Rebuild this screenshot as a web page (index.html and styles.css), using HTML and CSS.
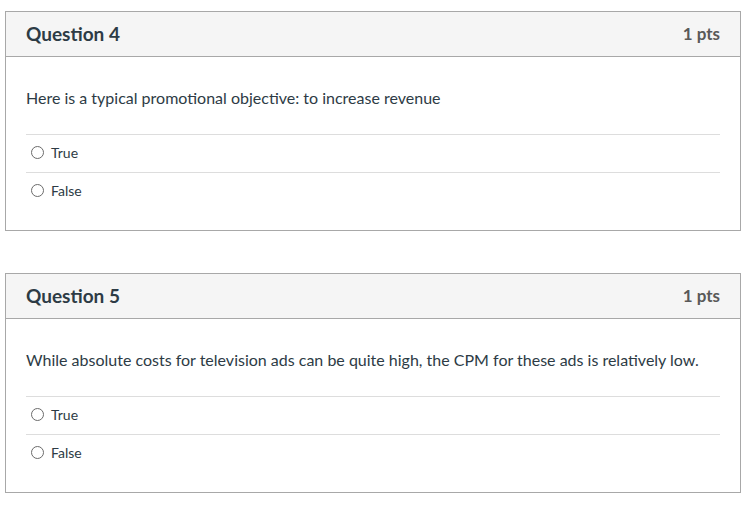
FILE: index.html
```html
<!DOCTYPE html>
<html>
<head>
<meta charset="utf-8">
<link rel="stylesheet" href="styles.css">
</head>
<body>
<div class="page">
  <div class="question">
    <div class="q-header">
      <span class="q-title">Question 4</span>
      <span class="q-points">1 pts</span>
    </div>
    <div class="q-body">
      <p class="q-text">Here is a typical promotional objective: to increase revenue</p>
      <div class="answers">
        <label class="answer"><span class="radio"></span><span class="a-label">True</span></label>
        <label class="answer"><span class="radio"></span><span class="a-label">False</span></label>
      </div>
    </div>
  </div>
  <div class="question">
    <div class="q-header">
      <span class="q-title">Question 5</span>
      <span class="q-points">1 pts</span>
    </div>
    <div class="q-body">
      <p class="q-text">While absolute costs for television ads can be quite high, the CPM for these ads is relatively low.</p>
      <div class="answers">
        <label class="answer"><span class="radio"></span><span class="a-label">True</span></label>
        <label class="answer"><span class="radio"></span><span class="a-label">False</span></label>
      </div>
    </div>
  </div>
</div>
</body>
</html>
```

FILE: styles.css
```css
html, body {
  margin: 0;
  padding: 0;
  background: #ffffff;
}
body {
  font-family: Lato, "Liberation Sans", sans-serif;
  color: #2d3b45;
}
.page {
  padding: 11px 5px 0 5px;
  display: flex;
  flex-direction: column;
  gap: 42px;
}
.question {
  border: 1px solid #a8a8a8;
  background: #fff;
}
.q-header {
  height: 44px;
  background: #f5f5f5;
  border-bottom: 1px solid #a8a8a8;
  display: flex;
  align-items: center;
  justify-content: space-between;
  padding: 0 20px;
}
.q-title {
  font-size: 19px;
  font-weight: 700;
  color: #2d3b45;
  line-height: 24px;
}
.q-points {
  font-size: 17px;
  font-weight: 700;
  color: #595959;
  line-height: 24px;
}
.q-body {
  padding: 30px 20px 20px 20px;
}
.q-text {
  margin: 0 0 25px 0;
  font-size: 16px;
  line-height: 22px;
}
.answers {
  display: flex;
  flex-direction: column;
}
.answer {
  display: flex;
  align-items: center;
  height: 37px;
  border-top: 1px solid #dddddd;
  padding-left: 5px;
  padding-bottom: 2px;
  box-sizing: border-box;
  height: 38px;
}
.radio {
  width: 11px;
  height: 11px;
  border: 1px solid #6b6b6b;
  border-radius: 50%;
  box-sizing: content-box;
  margin-right: 7px;
}
.a-label {
  font-size: 14px;
  line-height: 18px;
  color: #2d3b45;
}
```
